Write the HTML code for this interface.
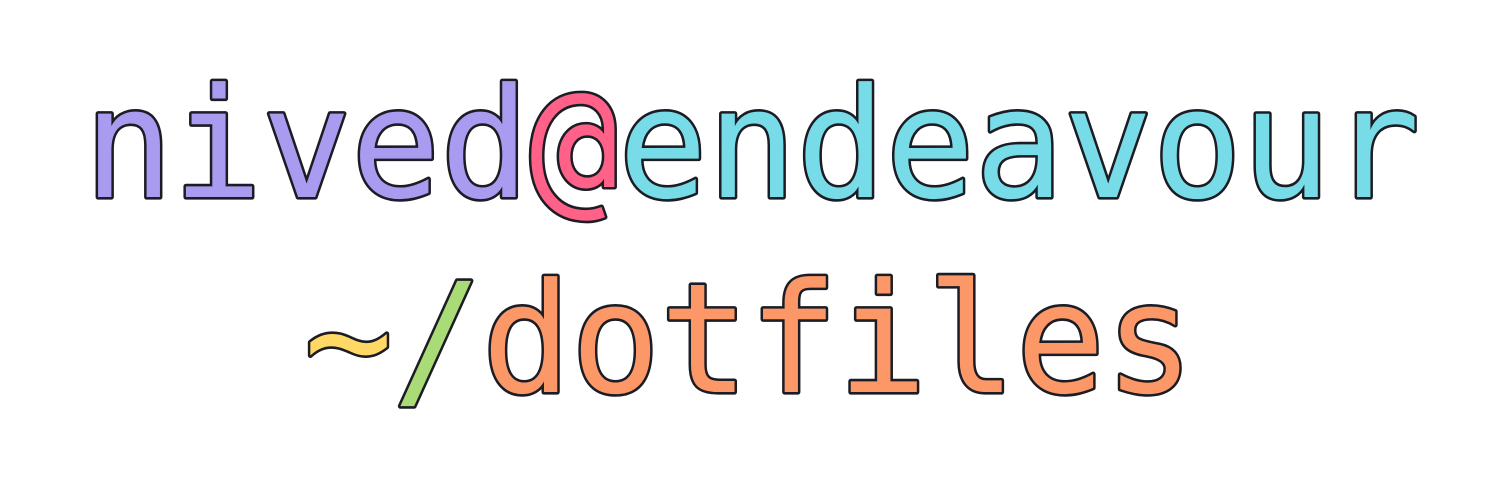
<!DOCTYPE html>
<html><head><meta charset="utf-8"><style>
html,body{margin:0;padding:0;background:#fff;width:1500px;height:500px;overflow:hidden}
svg text{font-family:"DejaVu Sans Mono","Liberation Mono",monospace;font-size:148px;font-weight:normal;stroke:#1c1c24;stroke-width:5px;stroke-linejoin:round;paint-order:stroke}
</style></head><body>
<svg width="1500" height="500" viewBox="0 0 1500 500">
<g transform="translate(0,197) scale(1,1.03)">
<text x="84" y="0" textLength="1336" lengthAdjust="spacing"><tspan fill="#a99cf0">nived</tspan><tspan fill="#ff6188">@</tspan><tspan fill="#78dce8">endeavour</tspan></text>
</g>
<g transform="translate(0,392) scale(1,1.03)">
<text x="304" y="0" textLength="890" lengthAdjust="spacing"><tspan fill="#ffd866">~</tspan><tspan fill="#a9dc76">/</tspan><tspan fill="#fc9867">dotfiles</tspan></text>
</g>
</svg>
</body></html>
